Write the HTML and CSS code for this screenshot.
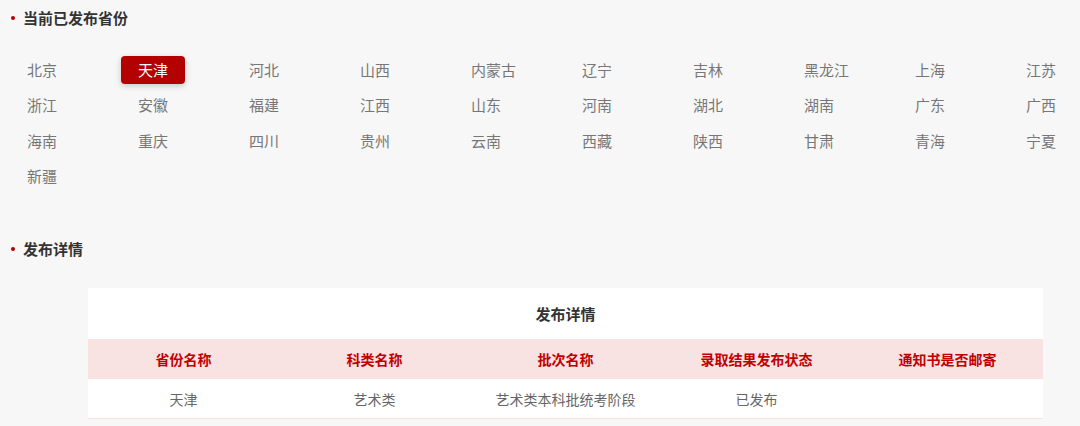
FILE: index.html
```html
<!DOCTYPE html>
<html>
	<head>
		<meta charset="UTF-8">
		<title>发布省份</title>
		<link rel="stylesheet" href="styles.css">
	</head>
	<body>
		<div class="title">当前已发布省份</div>
		<div class="provinces">
			<span class="prov">北京</span>
			<span class="prov active">天津</span>
			<span class="prov">河北</span>
			<span class="prov">山西</span>
			<span class="prov">内蒙古</span>
			<span class="prov">辽宁</span>
			<span class="prov">吉林</span>
			<span class="prov">黑龙江</span>
			<span class="prov">上海</span>
			<span class="prov">江苏</span>
			<span class="prov">浙江</span>
			<span class="prov">安徽</span>
			<span class="prov">福建</span>
			<span class="prov">江西</span>
			<span class="prov">山东</span>
			<span class="prov">河南</span>
			<span class="prov">湖北</span>
			<span class="prov">湖南</span>
			<span class="prov">广东</span>
			<span class="prov">广西</span>
			<span class="prov">海南</span>
			<span class="prov">重庆</span>
			<span class="prov">四川</span>
			<span class="prov">贵州</span>
			<span class="prov">云南</span>
			<span class="prov">西藏</span>
			<span class="prov">陕西</span>
			<span class="prov">甘肃</span>
			<span class="prov">青海</span>
			<span class="prov">宁夏</span>
			<span class="prov">新疆</span>
		</div>

		<div class="title">发布详情</div>
		<div class="detail">
			<div class="detail-head">发布详情</div>
			<table>
				<thead>
					<tr>
						<th>省份名称</th>
						<th>科类名称</th>
						<th>批次名称</th>
						<th>录取结果发布状态</th>
						<th>通知书是否邮寄</th>
					</tr>
				</thead>
				<tbody>
					<tr>
						<td>天津</td>
						<td>艺术类</td>
						<td>艺术类本科批统考阶段</td>
						<td>已发布</td>
						<td></td>
					</tr>
				</tbody>
			</table>
		</div>
	</body>
</html>
```

FILE: styles.css
```css
* {
	padding: 0;
	margin: 0;
}

body {
	background: #f7f7f7;
	font-family: "Noto Sans CJK SC", "Liberation Sans", sans-serif;
	color: #666;
	width: 1080px;
}

.title {
	position: relative;
	height: 36px;
	line-height: 36px;
	padding-left: 23px;
	font-size: 15px;
	font-weight: bold;
	color: #333;
}

.title::before {
	content: "";
	position: absolute;
	left: 11px;
	top: 16px;
	width: 4px;
	height: 4px;
	border-radius: 50%;
	background: #b30000;
}

.provinces {
	display: grid;
	grid-template-columns: repeat(10, 64px);
	grid-auto-rows: 28px;
	column-gap: 47px;
	row-gap: 7.33px;
	height: 134px;
	padding-left: 10px;
	margin-top: 20px;
	margin-bottom: 41px;
}

.prov {
	height: 28px;
	line-height: 28px;
	padding-left: 17px;
	font-size: 15px;
	color: #777;
	white-space: nowrap;
}

.prov.active {
	background: #b30000;
	color: #fff;
	border-radius: 4px;
	box-shadow: 0 2px 6px rgba(0, 0, 0, 0.2);
}

.detail {
	width: 955px;
	margin-left: 88px;
	margin-top: 21px;
	background: #fff;
}

.detail-head {
	height: 51px;
	line-height: 51px;
	text-align: center;
	font-size: 15px;
	font-weight: bold;
	color: #333;
}

table {
	width: 100%;
	border-collapse: collapse;
	table-layout: fixed;
}

th {
	height: 40px;
	background: #f8e2e2;
	color: #c00000;
	font-size: 14px;
	font-weight: bold;
	text-align: center;
}

td {
	height: 39px;
	font-size: 14px;
	color: #666;
	text-align: center;
	border-bottom: 1px solid #f5e0e0;
}
```
